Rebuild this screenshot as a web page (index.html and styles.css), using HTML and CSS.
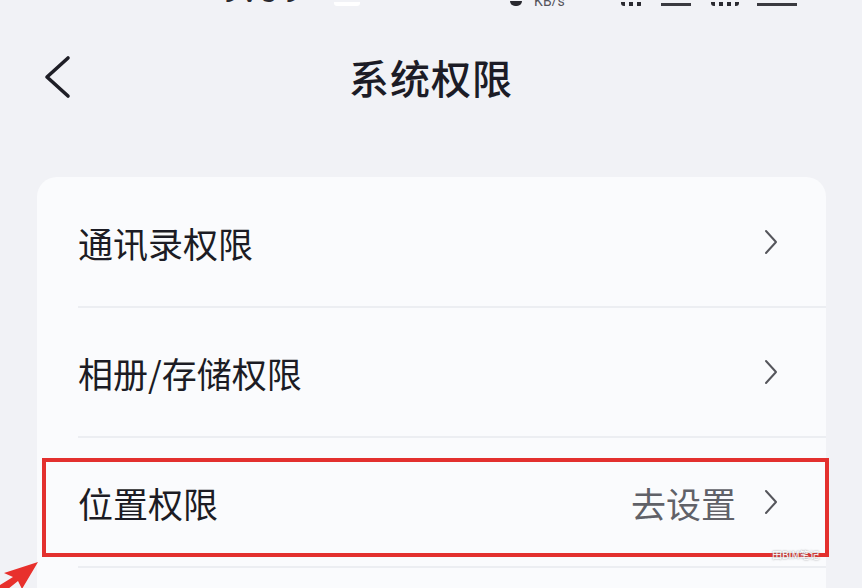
FILE: index.html
```html
<!DOCTYPE html>
<html lang="zh-CN">
<head>
    <meta charset="UTF-8">
    <meta name="viewport" content="width=device-width, initial-scale=1.0">
    <title>系统权限</title>
    <link rel="stylesheet" href="styles.css">
</head>
<body>
    <div class="status">
        <span class="time">9:59</span>
        <span class="blob"></span>
        <span class="dot"></span>
        <span class="speed">KB/s</span>
        <span class="bars b1"></span>
        <span class="batt b2"></span>
        <span class="bars b3"></span>
        <span class="batt b4"></span>
    </div>

    <div class="nav">
        <svg class="back" width="28" height="44" viewBox="0 0 28 44">
            <polyline points="25,3 4,22 25,41" fill="none" stroke="#1e1e26" stroke-width="3.6" stroke-linecap="round" stroke-linejoin="round"/>
        </svg>
        <h1 class="title">系统权限</h1>
        <span></span>
    </div>

    <div class="card">
        <div class="row">
            <span class="label">通讯录权限</span>
            <svg class="arrow" width="14" height="26" viewBox="0 0 14 26">
                <polyline points="2,2 12,13 2,24" fill="none" stroke="#55565c" stroke-width="2" stroke-linecap="round" stroke-linejoin="round"/>
            </svg>
        </div>
        <div class="row">
            <span class="label">相册/存储权限</span>
            <svg class="arrow" width="14" height="26" viewBox="0 0 14 26">
                <polyline points="2,2 12,13 2,24" fill="none" stroke="#55565c" stroke-width="2" stroke-linecap="round" stroke-linejoin="round"/>
            </svg>
        </div>
        <div class="row marked">
            <span class="label">位置权限</span>
            <span class="value">去设置</span>
            <svg class="arrow" width="14" height="26" viewBox="0 0 14 26">
                <polyline points="2,2 12,13 2,24" fill="none" stroke="#55565c" stroke-width="2" stroke-linecap="round" stroke-linejoin="round"/>
            </svg>
            <div class="highlight"></div>
        </div>
        <div class="row"></div>
    </div>

    <svg class="pointer" width="40" height="28" viewBox="0 0 40 28">
        <polygon points="38,1 4,12 13,16 0,24 0,28 8,28 18,20 22,28" fill="#e8302c"/>
    </svg>
    <span class="mark">田BIM笔记</span>
</body>
</html>
```

FILE: styles.css
```css
html, body {
    margin: 0;
    height: 588px;
    overflow: hidden;
}
body {
    background-color: #f1f2f6;
    font-family: "Noto Sans CJK SC", "Noto Sans", sans-serif;
    color: #1c1c24;
    position: relative;
}

/* status bar, mostly cut off at the top */
.status {
    height: 6px;
    overflow: hidden;
    display: flex;
    align-items: flex-end;
}
.status span {
    display: block;
    background: #2a2a30;
    height: 4px;
    border-radius: 0 0 3px 3px;
}
.status .time,
.status .speed {
    background: none;
    height: auto;
    font-family: "Roboto", sans-serif;
    font-weight: 700;
    line-height: 1;
    color: #2a2a30;
}
.status .time {
    margin-left: 222px;
    margin-bottom: -1px;
    font-size: 30px;
    letter-spacing: 6px;
}
.status .blob {
    margin-left: 28px;
    width: 26px;
    background: #ffffff;
}
.status .dot {
    margin-left: 150px;
    width: 12px;
    height: 5px;
    border-radius: 0 0 6px 6px;
}
.status .speed {
    margin-left: 12px;
    margin-bottom: -2px;
    font-size: 14px;
    font-weight: 400;
    color: #55555c;
}
.status .bars {
    width: 22px;
    background: repeating-linear-gradient(90deg, #2a2a30 0 4px, transparent 4px 8px);
}
.status .b1 { margin-left: 56px; }
.status .b3 { margin-left: 20px; width: 28px; }
.status .batt {
    width: 30px;
    height: 3px;
    background: #3a3a40;
    border-radius: 0;
}
.status .b2 { margin-left: 18px; }
.status .b4 { margin-left: 18px; width: 40px; }

/* nav */
.nav {
    height: 148px;
    display: grid;
    grid-template-columns: 1fr auto 1fr;
    align-items: center;
    padding-left: 43px;
}
.back {
    display: block;
    margin-top: -6px;
}
.title {
    margin: -6px 43px 0 0;
    font-size: 40px;
    font-weight: 500;
    color: #1c1c26;
    letter-spacing: 1px;
}

/* card list */
.card {
    margin: 23px 36px 0 37px;
    background: #fafbfd;
    border-radius: 20px 20px 0 0;
}
.row {
    height: 130px;
    display: flex;
    align-items: center;
    padding: 0 48px 0 41px;
    position: relative;
    font-size: 35px;
}
.row + .row::before {
    content: "";
    position: absolute;
    top: -1px;
    left: 41px;
    right: 0;
    height: 2px;
    background: #eceef2;
}
.label {
    flex: 1;
    color: #1c1c24;
}
.value {
    color: #606168;
    margin-right: 28px;
}
.arrow {
    display: block;
}

/* annotation */
.highlight {
    position: absolute;
    left: 5px;
    top: 21px;
    width: 779px;
    height: 91px;
    border: 4px solid #e3302e;
}
.pointer {
    position: absolute;
    left: 0;
    top: 561px;
}
.mark {
    position: absolute;
    left: 772px;
    top: 549px;
    font-size: 10px;
    line-height: 12px;
    color: #ffffff;
    text-shadow: 0 0 2px #777;
}
```
